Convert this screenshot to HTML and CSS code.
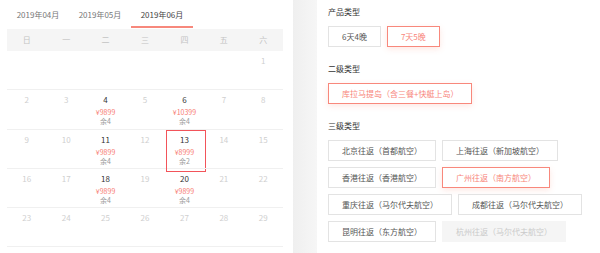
FILE: index.html
```html
<!DOCTYPE html>
<html lang="zh-CN">
<head>
  <meta charset="UTF-8" />
  <meta name="viewport" content="width=device-width, initial-scale=1.0" />
  <title>日期与产品选择</title>
  <link rel="stylesheet" href="styles.css">
</head>
<body>
  <div class="page">
    <div class="calendar-panel">
      <div class="tabs">
        <div class="tab">2019年04月</div>
        <div class="tab">2019年05月</div>
        <div class="tab active">2019年06月</div>
      </div>
      <div class="week">
        <span>日</span><span>一</span><span>二</span><span>三</span><span>四</span><span>五</span><span>六</span>
      </div>
      <div class="days">
        <div class="day"></div><div class="day"></div><div class="day"></div><div class="day"></div><div class="day"></div><div class="day"></div>
        <div class="day"><span class="num">1</span></div>

        <div class="day"><span class="num">2</span></div>
        <div class="day"><span class="num">3</span></div>
        <div class="day on"><span class="num">4</span><span class="price">¥9899</span><span class="left">余4</span></div>
        <div class="day"><span class="num">5</span></div>
        <div class="day on"><span class="num">6</span><span class="price">¥10399</span><span class="left">余4</span></div>
        <div class="day"><span class="num">7</span></div>
        <div class="day"><span class="num">8</span></div>

        <div class="day"><span class="num">9</span></div>
        <div class="day"><span class="num">10</span></div>
        <div class="day on"><span class="num">11</span><span class="price">¥9899</span><span class="left">余4</span></div>
        <div class="day"><span class="num">12</span></div>
        <div class="day on picked"><span class="num">13</span><span class="price">¥8999</span><span class="left">余2</span></div>
        <div class="day"><span class="num">14</span></div>
        <div class="day"><span class="num">15</span></div>

        <div class="day"><span class="num">16</span></div>
        <div class="day"><span class="num">17</span></div>
        <div class="day on"><span class="num">18</span><span class="price">¥9899</span><span class="left">余4</span></div>
        <div class="day"><span class="num">19</span></div>
        <div class="day on"><span class="num">20</span><span class="price">¥9899</span><span class="left">余4</span></div>
        <div class="day"><span class="num">21</span></div>
        <div class="day"><span class="num">22</span></div>

        <div class="day"><span class="num">23</span></div>
        <div class="day"><span class="num">24</span></div>
        <div class="day"><span class="num">25</span></div>
        <div class="day"><span class="num">26</span></div>
        <div class="day"><span class="num">27</span></div>
        <div class="day"><span class="num">28</span></div>
        <div class="day"><span class="num">29</span></div>
      </div>
    </div>

    <div class="gutter"></div>

    <div class="options-panel">
      <div class="group">
        <div class="label">产品类型</div>
        <div class="choices">
          <span class="choice">6天4晚</span>
          <span class="choice selected">7天5晚</span>
        </div>
      </div>
      <div class="group">
        <div class="label">二级类型</div>
        <div class="choices">
          <span class="choice selected">库拉马提岛（含三餐+快艇上岛）</span>
        </div>
      </div>
      <div class="group">
        <div class="label">三级类型</div>
        <div class="choices">
          <span class="choice">北京往返（首都航空）</span>
          <span class="choice">上海往返（新加坡航空）</span>
        </div>
        <div class="choices">
          <span class="choice">香港往返（香港航空）</span>
          <span class="choice selected">广州往返（南方航空）</span>
        </div>
        <div class="choices">
          <span class="choice">重庆往返（马尔代夫航空）</span>
          <span class="choice">成都往返（马尔代夫航空）</span>
        </div>
        <div class="choices">
          <span class="choice">昆明往返（东方航空）</span>
          <span class="choice disabled">杭州往返（马尔代夫航空）</span>
        </div>
      </div>
    </div>
  </div>
</body>
</html>
```

FILE: styles.css
```css
body {
  margin: 0;
  font-family: "Noto Sans CJK SC", "Noto Sans", sans-serif;
  background: #fff;
  color: #333;
  overflow: hidden;
}
.page {
  display: flex;
  width: 600px;
  height: 253px;
  overflow: hidden;
}
.calendar-panel {
  width: 276px;
  padding: 0 10px 0 7px;
  flex-shrink: 0;
}
.tabs {
  display: flex;
  height: 29px;
}
.tab {
  width: 62px;
  height: 28px;
  box-sizing: border-box;
  padding-top: 10px;
  text-align: center;
  font-size: 8px;
  line-height: 10px;
  color: #777;
}
.tab.active {
  color: #444;
  border-bottom: 2px solid #f7887c;
}
.week {
  display: grid;
  grid-template-columns: repeat(7, 1fr);
  height: 22px;
  background: #f5f5f5;
  font-size: 8px;
  line-height: 22px;
  color: #c4c4c4;
  text-align: center;
}
.days {
  display: grid;
  grid-template-columns: repeat(7, 1fr);
  grid-auto-rows: 39.25px;
}
.day {
  position: relative;
  box-sizing: border-box;
  border-bottom: 1px solid #f0f0f0;
  padding-top: 5px;
  display: flex;
  flex-direction: column;
  align-items: center;
  text-align: center;
}
.num {
  font-size: 8px;
  line-height: 10px;
  color: #cfcfcf;
}
.day.on .num {
  color: #333;
}
.price {
  margin-top: 3px;
  font-size: 7px;
  line-height: 9px;
  color: #f77a72;
}
.left {
  font-size: 7px;
  line-height: 9px;
  color: #999;
}
.day.picked::after {
  content: "";
  position: absolute;
  top: 0;
  left: 1px;
  width: 40px;
  height: 42px;
  box-sizing: border-box;
  border: 1px solid #f2545a;
}
.gutter {
  width: 24px;
  flex-shrink: 0;
  background: linear-gradient(to right, #efefef, #f6f6f6);
}
.options-panel {
  flex: 1;
  padding: 6px 0 0 11px;
}
.group {
  margin-bottom: 16px;
}
.label {
  font-size: 8px;
  line-height: 12px;
  color: #333;
  margin-bottom: 8px;
}
.choices {
  display: flex;
  gap: 6px;
  margin-bottom: 6px;
}
.choice {
  box-sizing: border-box;
  height: 21px;
  padding: 0 13px;
  border: 1px solid #e3e3e3;
  font-size: 8px;
  line-height: 19px;
  color: #555;
  white-space: nowrap;
}
.choice.selected {
  border-color: #f8887c;
  color: #f8857a;
  box-shadow: 0 2px 6px rgba(248, 120, 100, 0.18);
}
.choice.disabled {
  border-color: #f5f5f5;
  background: #f5f5f5;
  color: #cacaca;
}
```
